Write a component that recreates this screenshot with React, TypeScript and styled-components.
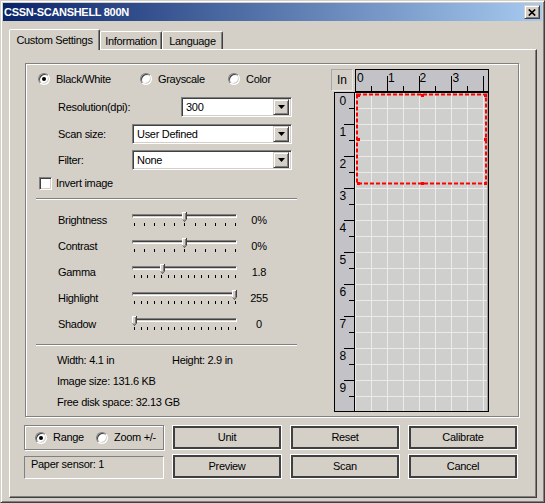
import styled, { createGlobalStyle, css } from "styled-components";

const GlobalStyle = createGlobalStyle`
  html, body { margin: 0; padding: 0; background: #d4d0c8; }
  body {
    font-family: "Liberation Sans", Arial, sans-serif;
    font-size: 11px;
    line-height: 13px;
    color: #000;
    letter-spacing: -0.3px;
  }
  *, *::before, *::after { box-sizing: border-box; }
`;

const sliders = [
  { label: "Brightness", value: 0.5, ticks: 11, text: "0%" },
  { label: "Contrast", value: 0.5, ticks: 11, text: "0%" },
  { label: "Gamma", value: 0.275, ticks: 16, text: "1.8" },
  { label: "Highlight", value: 1, ticks: 16, text: "255" },
  { label: "Shadow", value: 0, ticks: 16, text: "0" },
];

const hTicks = Array.from({ length: 8 }, (_, k) => k);
const vTicks = Array.from({ length: 19 }, (_, j) => j);
const inches = Array.from({ length: 10 }, (_, n) => n);

const handles = [
  [2, 1], [66, 1], [129, 1],
  [2, 45], [129, 45],
  [2, 89], [66, 89], [129, 89],
];

const Slider = ({ value, ticks }: { value: number; ticks: number }) => (
  <SliderBox>
    <Track />
    <Ticks>
      {Array.from({ length: ticks }, (_, i) => (
        <Tick key={i} />
      ))}
    </Ticks>
    <Thumb style={{ left: value * 100 }}>
      <svg width="5" height="10" viewBox="0 0 5 10">
        <polygon points="0,0 5,0 5,7 2.5,10 0,7" fill="#404040" />
        <polygon points="0,0 4,0 4,7 2.5,8.8 0,7" fill="#fff" />
        <polygon points="1,1 4,1 4,7 2.5,8.8 1,7" fill="#808080" />
        <polygon points="1,1 3,1 3,7 2.5,7.8 1,7" fill="#d4d0c8" />
      </svg>
    </Thumb>
  </SliderBox>
);

const Combo = ({ value, width }: { value: string; width: number }) => (
  <ComboBox $w={width}>
    <ComboText>{value}</ComboText>
    <DropButton>
      <svg width="7" height="4" viewBox="0 0 7 4">
        <path d="M0 0h7L3.5 4z" fill="#000" />
      </svg>
    </DropButton>
  </ComboBox>
);

const App = () => (
  <>
    <GlobalStyle />
    <Window>
      <TitleBar>
        <Title>CSSN-SCANSHELL 800N</Title>
        <CloseButton>
          <svg width="8" height="7" viewBox="0 0 8 7">
            <path d="M0.8 0.5L7.2 6.5M7.2 0.5L0.8 6.5" stroke="#000" strokeWidth="1.7" />
          </svg>
        </CloseButton>
      </TitleBar>
      <Body>
        <TabRow>
          <Tab $active $w={91}>Custom Settings</Tab>
          <Tab $w={62}>Information</Tab>
          <Tab $w={61}>Language</Tab>
        </TabRow>
        <Panel>
          <GroupBox>
            <LeftColumn>
              <RadioRow>
                <RadioItem $w={102}>
                  <Radio $on />
                  Black/White
                </RadioItem>
                <RadioItem $w={88}>
                  <Radio />
                  Grayscale
                </RadioItem>
                <RadioItem>
                  <Radio />
                  Color
                </RadioItem>
              </RadioRow>
              <FieldRow $mt={10}>
                <FieldLabel>Resolution(dpi):</FieldLabel>
                <Spacer />
                <Combo value="300" width={111} />
              </FieldRow>
              <FieldRow $mt={7}>
                <FieldLabel>Scan size:</FieldLabel>
                <Combo value="User Defined" width={160} />
              </FieldRow>
              <FieldRow $mt={6}>
                <FieldLabel>Filter:</FieldLabel>
                <Combo value="None" width={160} />
              </FieldRow>
              <CheckRow>
                <CheckBox />
                Invert image
              </CheckRow>
              <Separator $mt={8} />
              <SliderList>
                {sliders.map((s) => (
                  <SliderRow key={s.label}>
                    <FieldLabel>{s.label}</FieldLabel>
                    <Slider value={s.value} ticks={s.ticks} />
                    <SliderValue>{s.text}</SliderValue>
                  </SliderRow>
                ))}
              </SliderList>
              <Separator $mt={7} />
              <InfoList>
                <InfoLine>
                  <InfoCell>Width: 4.1 in</InfoCell>
                  Height: 2.9 in
                </InfoLine>
                <InfoLine>Image size: 131.6 KB</InfoLine>
                <InfoLine>Free disk space: 32.13 GB</InfoLine>
              </InfoList>
            </LeftColumn>

            <Preview>
              <RulerTop>
                <UnitBox>In</UnitBox>
                <HRuler>
                  <svg width="132" height="21" viewBox="0 0 132 21">
                    {hTicks.map((k) => (
                      <line
                        key={k}
                        x1={15.5 + 16 * k}
                        x2={15.5 + 16 * k}
                        y1={k % 2 ? 6 : 16}
                        y2={21}
                        stroke="#000"
                      />
                    ))}
                    {[1, 32, 63.5, 96.5].map((x, n) => (
                      <RulerNum key={n} x={x} y={12}>
                        {n}
                      </RulerNum>
                    ))}
                  </svg>
                </HRuler>
              </RulerTop>
              <Frame>
                <VRuler>
                  <svg width="19" height="318" viewBox="0 0 19 318">
                    {vTicks.map((j) => (
                      <line
                        key={j}
                        x1={j % 2 ? 9 : 14}
                        x2={19}
                        y1={15.5 + 16 * j}
                        y2={15.5 + 16 * j}
                        stroke="#000"
                      />
                    ))}
                    {inches.map((n) => (
                      <RulerNum key={n} x={4.5} y={n === 0 ? 12 : 32 * n + 11}>
                        {n}
                      </RulerNum>
                    ))}
                  </svg>
                </VRuler>
                <Canvas>
                  <Selection width="132" height="318" viewBox="0 0 132 318">
                    <rect
                      x="2"
                      y="1.5"
                      width="129"
                      height="89"
                      fill="none"
                      stroke="#f00"
                      strokeWidth="2"
                      strokeDasharray="4 2"
                    />
                    {handles.map(([x, y], i) => (
                      <rect key={i} x={x} y={y} width="3" height="3" fill="#f00" />
                    ))}
                  </Selection>
                </Canvas>
              </Frame>
            </Preview>
          </GroupBox>

          <BottomRow>
            <LeftStack>
              <RangeBox>
                <RadioItem $w={61}>
                  <Radio $on />
                  Range
                </RadioItem>
                <RadioItem>
                  <Radio />
                  Zoom +/-
                </RadioItem>
              </RangeBox>
              <SensorBox>Paper sensor: 1</SensorBox>
            </LeftStack>
            <ButtonGrid>
              <Button>Unit</Button>
              <Button>Reset</Button>
              <Button>Calibrate</Button>
              <Button>Preview</Button>
              <Button>Scan</Button>
              <Button>Cancel</Button>
            </ButtonGrid>
          </BottomRow>
        </Panel>
      </Body>
    </Window>
  </>
);

const raised = css`
  border: 1px solid;
  border-color: #d4d0c8 #404040 #404040 #d4d0c8;
  box-shadow: inset 1px 1px #fff, inset -1px -1px #808080;
`;

const sunken = css`
  border: 1px solid;
  border-color: #808080 #fff #fff #808080;
  box-shadow: inset 1px 1px #404040, inset -1px -1px #d4d0c8;
`;

const etched = css`
  border: 1px solid #808080;
  box-shadow: inset 1px 1px #fff, 1px 1px #fff;
`;

const Window = styled.div`
  width: 545px;
  height: 503px;
  display: flex;
  flex-direction: column;
  padding: 2px;
  background: #d4d0c8;
  ${raised}
`;

const TitleBar = styled.div`
  height: 18px;
  display: flex;
  align-items: center;
  justify-content: space-between;
  padding: 0 2px 0 1px;
  background: linear-gradient(to right, #0a246a, #a6caf0);
`;

const Title = styled.div`
  color: #fff;
  font-weight: bold;
  font-size: 11px;
`;

const CloseButton = styled.div`
  width: 16px;
  height: 14px;
  display: flex;
  align-items: center;
  justify-content: center;
  background: #d4d0c8;
  ${raised}
`;

const Body = styled.div`
  flex: 1;
  display: flex;
  flex-direction: column;
  padding: 8px 5px 2px 6px;
`;

const TabRow = styled.div`
  height: 20px;
  display: flex;
  align-items: flex-end;
`;

const Tab = styled.div<{ $active?: boolean; $w: number }>`
  width: ${(p) => p.$w}px;
  height: ${(p) => (p.$active ? 21 : 18)}px;
  margin-bottom: ${(p) => (p.$active ? -1 : 0)}px;
  padding-top: ${(p) => (p.$active ? 0 : 2)}px;
  display: flex;
  align-items: center;
  justify-content: center;
  background: #d4d0c8;
  border: 1px solid;
  border-bottom: none;
  border-color: #fff #404040 transparent #fff;
  border-radius: 2px 2px 0 0;
  box-shadow: inset -1px 0 #808080;
  position: relative;
  z-index: ${(p) => (p.$active ? 2 : 1)};
  white-space: nowrap;
`;

const Panel = styled.div`
  height: 449px;
  display: flex;
  flex-direction: column;
  padding: 13px 0 0 14px;
  border: 1px solid;
  border-color: #fff #404040 #404040 #fff;
  box-shadow: inset -1px -1px #808080;
`;

const GroupBox = styled.div`
  width: 494px;
  height: 354px;
  margin-left: 1px;
  display: flex;
  padding-left: 10px;
  ${etched}
`;

const LeftColumn = styled.div`
  width: 261px;
  display: flex;
  flex-direction: column;
`;

const RadioRow = styled.div`
  height: 16px;
  margin-top: 7px;
  padding-left: 2px;
  display: flex;
  align-items: center;
`;

const RadioItem = styled.div<{ $w?: number }>`
  ${(p) => p.$w && `width: ${p.$w}px;`}
  display: flex;
  align-items: center;
  gap: 6px;
  white-space: nowrap;
`;

const Radio = styled.span<{ $on?: boolean }>`
  width: 12px;
  height: 12px;
  flex-shrink: 0;
  border-radius: 50%;
  background: #fff;
  position: relative;
  ${sunken}
  ${(p) =>
    p.$on &&
    css`
      &::after {
        content: "";
        position: absolute;
        left: 3px;
        top: 3px;
        width: 4px;
        height: 4px;
        border-radius: 50%;
        background: #000;
      }
    `}
`;

const FieldRow = styled.div<{ $mt: number }>`
  width: 256px;
  height: 20px;
  margin-top: ${(p) => p.$mt}px;
  display: flex;
  align-items: center;
`;

const FieldLabel = styled.div`
  width: 96px;
  padding-left: 22px;
  flex-shrink: 0;
  white-space: nowrap;
`;

const Spacer = styled.div`
  flex: 1;
`;

const ComboBox = styled.div<{ $w: number }>`
  width: ${(p) => p.$w}px;
  height: 20px;
  display: flex;
  align-items: center;
  padding: 2px;
  background: #fff;
  ${sunken}
`;

const ComboText = styled.div`
  flex: 1;
  padding-left: 2px;
`;

const DropButton = styled.div`
  width: 16px;
  height: 16px;
  display: flex;
  align-items: center;
  justify-content: center;
  background: #d4d0c8;
  ${raised}
`;

const CheckRow = styled.div`
  height: 13px;
  margin-top: 7px;
  padding-left: 3px;
  display: flex;
  align-items: center;
  gap: 4px;
`;

const CheckBox = styled.span`
  width: 13px;
  height: 13px;
  background: #fff;
  ${sunken}
`;

const Separator = styled.div<{ $mt: number }>`
  width: 261px;
  height: 2px;
  margin-top: ${(p) => p.$mt}px;
  border-top: 1px solid #808080;
  border-bottom: 1px solid #fff;
`;

const SliderList = styled.div`
  margin-top: 7px;
  display: flex;
  flex-direction: column;
`;

const SliderRow = styled.div`
  height: 26px;
  display: flex;
  align-items: center;
`;

const SliderBox = styled.div`
  width: 105px;
  height: 26px;
  position: relative;
  display: flex;
  flex-direction: column;
`;

const Track = styled.div`
  height: 4px;
  margin-top: 7px;
  border-top: 1px solid #808080;
  border-left: 1px solid #808080;
  border-bottom: 1px solid #fff;
  border-right: 1px solid #fff;
  background: #d4d0c8;
  box-shadow: inset 0 1px #404040;
`;

const Ticks = styled.div`
  height: 3px;
  margin-top: 5px;
  padding: 0 1px 0 2px;
  display: flex;
  justify-content: space-between;
`;

const Tick = styled.span`
  width: 1px;
  height: 3px;
  background: #000;
`;

const Thumb = styled.div`
  position: absolute;
  top: 5px;
  width: 5px;
  height: 10px;
  display: flex;
`;

const SliderValue = styled.div`
  width: 22px;
  margin-left: 11px;
  text-align: center;
`;

const InfoList = styled.div`
  margin-top: 4px;
  display: flex;
  flex-direction: column;
`;

const InfoLine = styled.div`
  height: 21px;
  padding-left: 21px;
  display: flex;
  align-items: center;
  white-space: nowrap;
`;

const InfoCell = styled.span`
  width: 115px;
`;

const Preview = styled.div`
  margin: 5px 0 0 34px;
  display: flex;
  flex-direction: column;
`;

const RulerTop = styled.div`
  height: 23px;
  display: flex;
  align-items: flex-start;
`;

const UnitBox = styled.div`
  width: 22px;
  height: 22px;
  margin-right: 2px;
  display: flex;
  align-items: center;
  justify-content: center;
  font-size: 12px;
  letter-spacing: 0;
  border: 1px solid;
  border-color: #a8a8a8 #e8e8e8 #e8e8e8 #a8a8a8;
`;

const HRuler = styled.div`
  width: 134px;
  height: 23px;
  display: flex;
  background: #c3c3c7;
  border: 1px solid #000;
`;

const RulerNum = styled.text`
  font-family: "Liberation Sans", Arial, sans-serif;
  font-size: 12px;
  letter-spacing: 0;
  fill: #000;
`;

const Frame = styled.div`
  width: 155px;
  height: 320px;
  margin-left: 3px;
  display: flex;
  border: 1px solid #000;
`;

const VRuler = styled.div`
  width: 20px;
  display: flex;
  background: #c3c3c7;
  border-right: 1px solid #000;
`;

const Canvas = styled.div`
  flex: 1;
  position: relative;
  border-right: 1px solid #a0a0a0;
  background-color: #cfd0cd;
  background-image: linear-gradient(to right, #ebebeb 1px, transparent 1px),
    linear-gradient(to bottom, #ebebeb 1px, transparent 1px);
  background-size: 16px 16px;
  background-position: 0 15px;
`;

const Selection = styled.svg`
  position: absolute;
  left: 0;
  top: 0;
`;

const BottomRow = styled.div`
  margin-top: 8px;
  display: flex;
  gap: 8px;
`;

const LeftStack = styled.div`
  width: 140px;
  display: flex;
  flex-direction: column;
  gap: 6px;
`;

const RangeBox = styled.div`
  height: 25px;
  display: flex;
  align-items: center;
  padding-left: 10px;
  ${etched}
`;

const SensorBox = styled.div`
  height: 23px;
  padding: 1px 6px 0;
  border: 1px solid;
  border-color: #808080 #fff #fff #808080;
`;

const ButtonGrid = styled.div`
  display: grid;
  grid-template-columns: repeat(3, 110px);
  grid-auto-rows: 25px;
  gap: 4px 8px;
`;

const Button = styled.div`
  display: flex;
  align-items: center;
  justify-content: center;
  background: #d4d0c8;
  border: 1px solid #fff;
  box-shadow: inset 0 0 0 2px #404040;
`;

export default App;
